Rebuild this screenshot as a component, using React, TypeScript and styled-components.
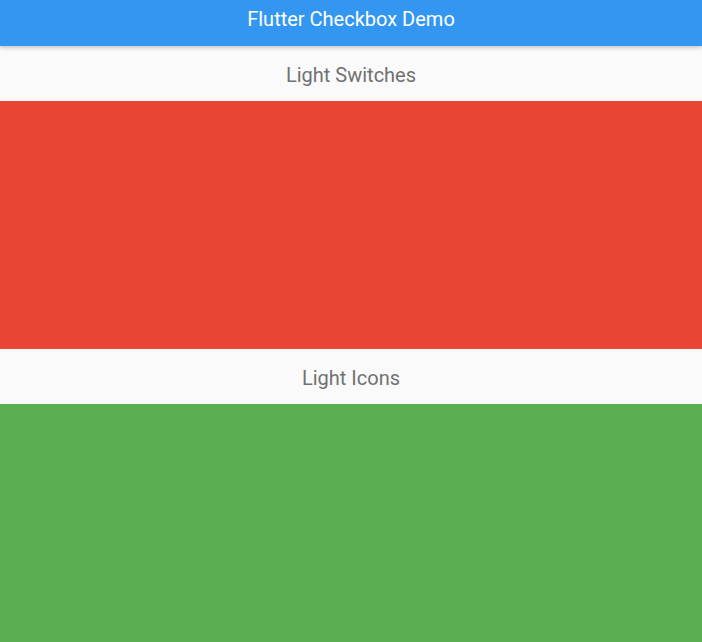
import React from 'react';
import styled, { createGlobalStyle } from 'styled-components';

const GlobalStyle = createGlobalStyle`
  html, body {
    margin: 0;
    padding: 0;
    background: #fafafa;
    font-family: Roboto, "Noto Sans", sans-serif;
  }
`;

const Page = styled.div`
  display: flex;
  flex-direction: column;
  height: 642px;
  overflow: hidden;
`;

const AppBar = styled.header`
  height: 46px;
  background: #3397f2;
  color: #ffffff;
  display: flex;
  justify-content: center;
  align-items: center;
  font-size: 20px;
  padding-bottom: 8px;
  box-sizing: border-box;
  box-shadow: 0 2px 4px rgba(0, 0, 0, 0.2);
  position: relative;
  z-index: 1;
  flex-shrink: 0;
`;

const SectionTitle = styled.div`
  height: 55px;
  background: #fafafa;
  color: #717171;
  display: flex;
  justify-content: center;
  align-items: center;
  font-size: 20px;
  padding-top: 2px;
  box-sizing: border-box;
  flex-shrink: 0;
`;

const ColorBlock = styled.div<{ $color: string; $height: number }>`
  background: ${(p) => p.$color};
  height: ${(p) => p.$height}px;
  flex-shrink: 0;
`;

export default function App() {
  return (
    <>
      <GlobalStyle />
      <Page>
        <AppBar>Flutter Checkbox Demo</AppBar>
        <SectionTitle>Light Switches</SectionTitle>
        <ColorBlock $color="#e94535" $height={248} />
        <SectionTitle>Light Icons</SectionTitle>
        <ColorBlock $color="#5baf53" $height={238} />
      </Page>
    </>
  );
}
